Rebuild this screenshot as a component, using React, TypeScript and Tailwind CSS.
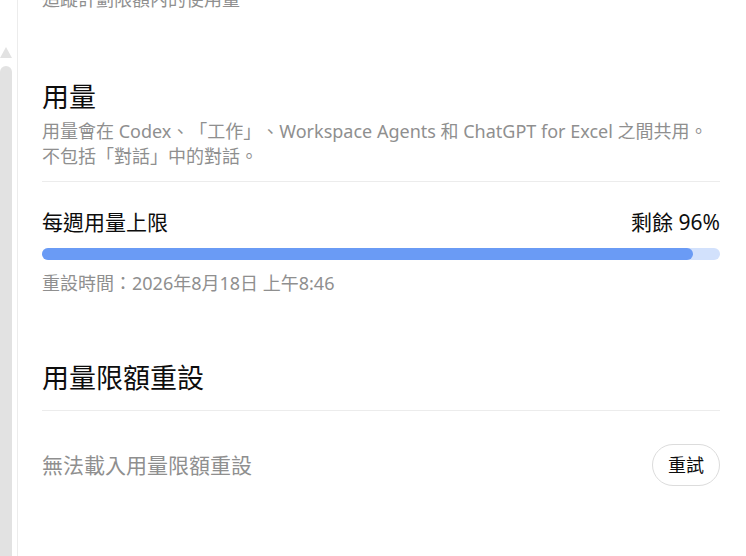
import React from "react";

const font = { fontFamily: '"Noto Sans", "Noto Sans CJK TC", sans-serif' };

function ScrollRail() {
  return (
    <div className="flex w-[12px] shrink-0 flex-col items-stretch">
      <svg className="mt-[47px] block" width="12" height="11" viewBox="0 0 12 11">
        <path d="M6 0 L12 11 L0 11 Z" fill="#e2e2e2" />
      </svg>
      <div className="mt-[8px] flex-1 rounded-t-[6px] bg-[#e2e2e2]" />
    </div>
  );
}

export default function App() {
  const remaining = 96;
  return (
    <div
      className="flex h-[556px] w-[746px] overflow-hidden bg-white [text-spacing-trim:space-all]"
      style={font}
    >
      <ScrollRail />
      <div className="ml-[5px] w-px bg-[#ececec]" />
      <main className="flex flex-1 flex-col pl-[24px] pr-[26px]">
        <p className="-mt-[13px] text-[18px] leading-[25px] text-[#8f8f8f]">
          追蹤計劃限額內的使用量
        </p>

        <section className="mt-[68px]">
          <h2 className="text-[27px] leading-[34px] text-[#0d0d0d]">用量</h2>
          <p className="mt-[5px] text-[18px] leading-[25px] text-[#8f8f8f]">
            用量會在 Codex、「工作」、Workspace Agents 和 ChatGPT for Excel 之間共用。
            <br />
            不包括「對話」中的對話。
          </p>
          <div className="mt-[12px] h-px bg-[#ececec]" />

          <div className="mt-[26px] flex items-center justify-between text-[21px] leading-[28px] text-[#0d0d0d]">
            <span>每週用量上限</span>
            <span>剩餘 {remaining}%</span>
          </div>
          <div className="mt-[12px] h-[12px] rounded-full bg-[#d2e1fc]">
            <div
              className="h-full rounded-full bg-[#6a9bf5]"
              style={{ width: `${remaining}%` }}
            />
          </div>
          <p className="mt-[10px] text-[18px] leading-[26px] text-[#8f8f8f]">
            重設時間：2026年8月18日 上午8:46
          </p>
        </section>

        <section className="mt-[65px]">
          <h2 className="text-[27px] leading-[34px] text-[#0d0d0d]">用量限額重設</h2>
          <div className="mt-[15px] h-px bg-[#ececec]" />
          <div className="mt-[33px] flex items-center justify-between">
            <span className="text-[21px] leading-[28px] text-[#8f8f8f]">
              無法載入用量限額重設
            </span>
            <button className="h-[42px] rounded-full border border-[#dcdcdc] bg-white px-[15px] text-[18px] text-[#0d0d0d]">
              重試
            </button>
          </div>
        </section>
      </main>
    </div>
  );
}
